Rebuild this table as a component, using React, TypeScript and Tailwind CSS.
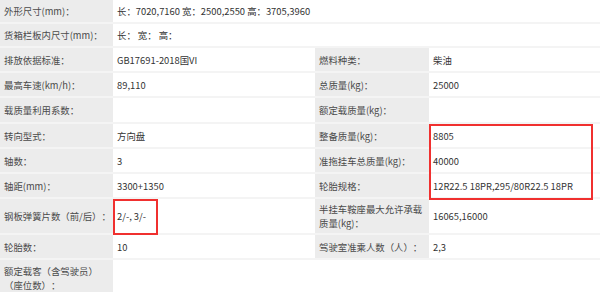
import { ReactNode } from 'react';

type Row = {
  h: string;
  label: ReactNode;
  value?: ReactNode;
  label2?: ReactNode;
  value2?: ReactNode;
  full?: boolean;
  last?: boolean;
};

const rows: Row[] = [
  { h: 'h-[24px]', label: '外形尺寸(mm)：', value: '长：7020,7160 宽：2500,2550 高：3705,3960', full: true },
  { h: 'h-[24px]', label: '货箱栏板内尺寸(mm)：', value: '长： 宽： 高：', full: true },
  { h: 'h-[25px]', label: '排放依据标准：', value: 'GB17691-2018国VI', label2: '燃料种类：', value2: '柴油' },
  { h: 'h-[25px]', label: '最高车速(km/h)：', value: '89,110', label2: '总质量(kg)：', value2: '25000' },
  { h: 'h-[26px]', label: '载质量利用系数：', value: '', label2: '额定载质量(kg)：', value2: '' },
  { h: 'h-[25px]', label: '转向型式：', value: '方向盘', label2: '整备质量(kg)：', value2: '8805' },
  { h: 'h-[25px]', label: '轴数：', value: '3', label2: '准拖挂车总质量(kg)：', value2: '40000' },
  { h: 'h-[25px]', label: '轴距(mm)：', value: '3300+1350', label2: '轮胎规格：', value2: '12R22.5 18PR,295/80R22.5 18PR' },
  {
    h: 'h-[36px]',
    label: '钢板弹簧片数（前/后）：',
    value: '2/-, 3/-',
    label2: (
      <>
        半挂车鞍座最大允许承载
        <br />
        质量(kg)：
      </>
    ),
    value2: '16065,16000',
  },
  { h: 'h-[25px]', label: '轮胎数：', value: '10', label2: '驾驶室准乘人数（人）：', value2: '2,3' },
  {
    h: 'h-[36px]',
    label: (
      <>
        额定载客（含驾驶员）
        <br />
        （座位数）：
      </>
    ),
    value: '',
    last: true,
  },
];

function Label({ children, w }: { children: ReactNode; w: string }) {
  return (
    <div className={`${w} shrink-0 h-full flex items-center bg-[#ececec] pl-[4px] text-[#4a4a4a] leading-[14px] whitespace-nowrap`}>
      <div>{children}</div>
    </div>
  );
}

function Value({ children, w }: { children: ReactNode; w: string }) {
  return (
    <div className={`${w} h-full flex items-center bg-white pl-[4px] text-[#333] leading-[14px] whitespace-nowrap`}>
      {children}
    </div>
  );
}

export default function App() {
  return (
    <div
      className="relative w-[600px] h-[292px] overflow-hidden bg-white text-[9.4px] [text-spacing-trim:space-all]"
      style={{ fontFamily: '"Noto Sans CJK SC", sans-serif' }}
    >
      {rows.map((row, i) => (
        <div
          key={i}
          className={`flex ${row.h} ${row.last ? '' : 'border-b-2 border-[#f4f4f4]'}`}
        >
          <Label w="w-[113px]">{row.label}</Label>
          {row.full ? (
            <Value w="flex-1">{row.value}</Value>
          ) : row.last ? (
            <Value w="w-[202px]">{row.value}</Value>
          ) : (
            <>
              <Value w="w-[202px]">{row.value}</Value>
              <Label w="w-[114px]">{row.label2}</Label>
              <Value w="flex-1">{row.value2}</Value>
            </>
          )}
        </div>
      ))}

      {/* red annotation boxes */}
      <div className="absolute left-[429px] top-[124px] w-[164px] h-[76px] border-2 border-[#f0302f]" />
      <div className="absolute left-[113px] top-[199px] w-[45px] h-[36px] border-2 border-[#f0302f]" />
    </div>
  );
}
